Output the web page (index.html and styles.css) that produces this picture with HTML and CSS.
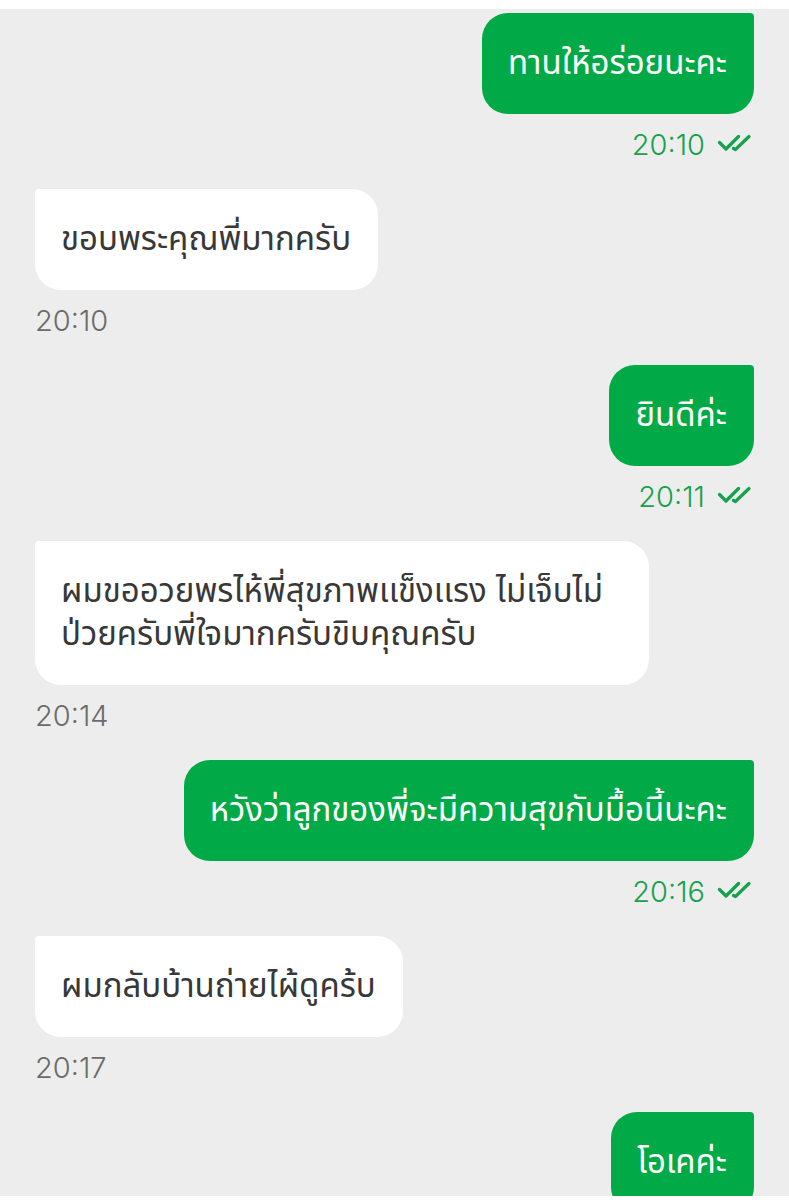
FILE: index.html
```html
<!DOCTYPE html>
<html lang="th">
<head>
<meta charset="utf-8">
<meta name="viewport" content="width=device-width, initial-scale=1">
<title>Chat</title>
<link rel="stylesheet" href="styles.css">
</head>
<body>
<svg class="sprite" aria-hidden="true">
  <symbol id="read" viewBox="0 0 34 18">
    <path d="M2.500 8.500 9 15 21.500 2.500M16.500 14.500 18.500 15.500 32 2.500" fill="none" stroke="currentColor" stroke-width="3.200" stroke-linecap="round" stroke-linejoin="round"/>
  </symbol>
</svg>
<main class="chat">
  <article class="message sent">
    <p class="bubble">ทานให้อร่อยนะคะ</p>
    <div class="meta"><time>20:10</time><svg class="read" role="img" aria-label="Read"><use href="#read"/></svg></div>
  </article>
  <article class="message">
    <p class="bubble">ขอบพระคุณพี่มากครับ</p>
    <div class="meta"><time>20:10</time></div>
  </article>
  <article class="message sent">
    <p class="bubble">ยินดีค่ะ</p>
    <div class="meta"><time>20:11</time><svg class="read" role="img" aria-label="Read"><use href="#read"/></svg></div>
  </article>
  <article class="message">
    <p class="bubble">ผมขออวยพรไห้พี่สุขภาพเเข็งเเรง ไม่เจ็บไม่ป่วยครับพี่ใจมากครับขิบคุณครับ</p>
    <div class="meta"><time>20:14</time></div>
  </article>
  <article class="message sent">
    <p class="bubble">หวังว่าลูกของพี่จะมีความสุขกับมื้อนี้นะคะ</p>
    <div class="meta"><time>20:16</time><svg class="read" role="img" aria-label="Read"><use href="#read"/></svg></div>
  </article>
  <article class="message">
    <p class="bubble">ผมกลับบ้านถ่ายไผ้ดูคร้บ</p>
    <div class="meta"><time>20:17</time></div>
  </article>
  <article class="message sent">
    <p class="bubble">โอเคค่ะ</p>
  </article>
</main>
</body>
</html>
```
FILE: styles.css
```css
* {
  box-sizing: border-box;
}

body {
  display: flex;
  flex-direction: column;
  height: 100vh;
  margin: 0;
  padding: 9px 0 4px;
  background: #fff;
  font-family: Inter, "Noto Sans Thai", "Noto Sans", sans-serif;
  font-weight: 350;
}

.sprite {
  display: none;
}

.chat {
  display: flex;
  flex: 1;
  flex-direction: column;
  min-height: 0;
  padding: 4px 35px 0;
  overflow: hidden;
  background: #ededed;
}

.message {
  display: flex;
  flex: none;
  flex-direction: column;
  align-items: flex-start;
}

.sent {
  align-items: flex-end;
}

.bubble {
  max-width: 614px;
  margin: 0;
  padding: 28px 27px 30px 26px;
  border-radius: 4px 26px 26px 26px;
  background: #fff;
  color: #383838;
  font-size: 33px;
  font-weight: 400;
  line-height: 43px;
}

.sent .bubble {
  border-radius: 26px 4px 26px 26px;
  background: #02aa47;
  color: #fff;
}

.meta {
  display: flex;
  align-items: center;
  gap: 12px;
  padding: 13px 0 27px;
  color: #6b6b6b;
  font-size: 29px;
  line-height: 35px;
}

.sent .meta {
  padding-right: 3px;
  color: #15a24a;
}

.read {
  width: 34px;
  height: 18px;
  margin-bottom: 4px;
}
```
